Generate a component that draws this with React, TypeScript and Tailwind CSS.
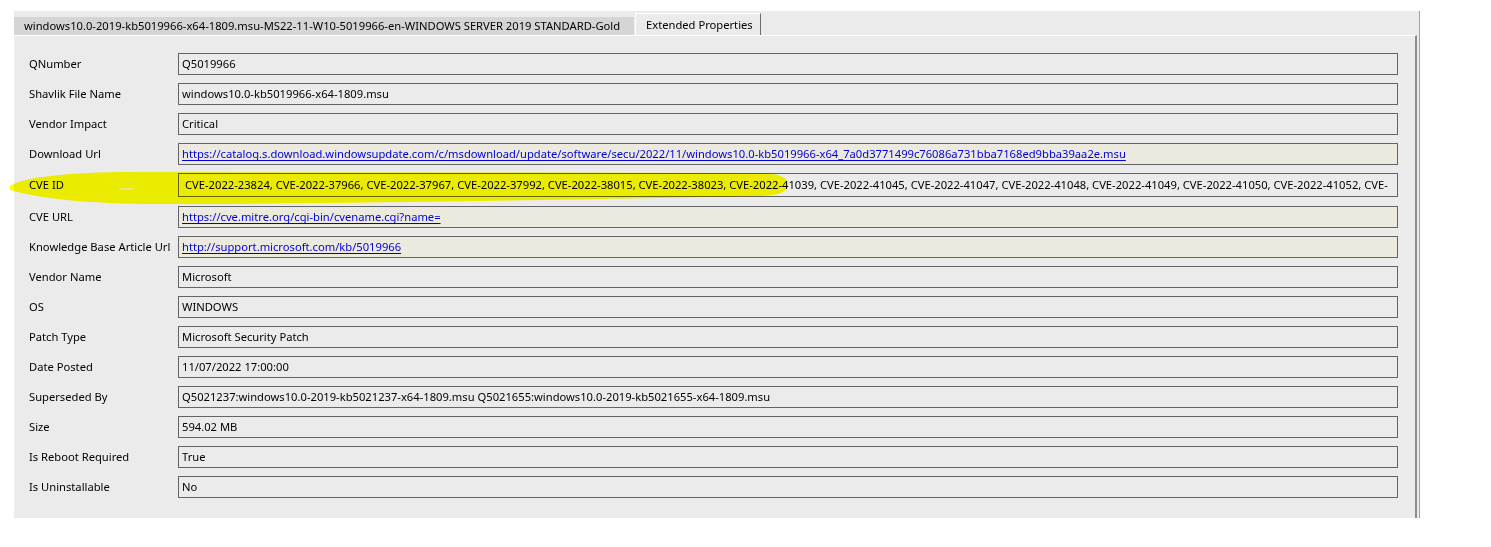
import React from "react";

type Field = {
  label: string;
  value: string;
  link?: boolean;
  tall?: boolean;
};

const cves =
  [
    "23824", "37966", "37967", "37992", "38015", "38023", "41039", "41045",
    "41047", "41048", "41049", "41050", "41052",
  ]
    .map((n) => `CVE-2022-${n}`)
    .join(", ") + ", CVE-";

const fields: Field[] = [
  { label: "QNumber", value: "Q5019966" },
  { label: "Shavlik File Name", value: "windows10.0-kb5019966-x64-1809.msu" },
  { label: "Vendor Impact", value: "Critical" },
  {
    label: "Download Url",
    value:
      "https://catalog.s.download.windowsupdate.com/c/msdownload/update/software/secu/2022/11/windows10.0-kb5019966-x64_7a0d3771499c76086a731bba7168ed9bba39aa2e.msu",
    link: true,
  },
  { label: "CVE ID", value: cves, tall: true },
  { label: "CVE URL", value: "https://cve.mitre.org/cgi-bin/cvename.cgi?name=", link: true },
  { label: "Knowledge Base Article Url", value: "http://support.microsoft.com/kb/5019966", link: true },
  { label: "Vendor Name", value: "Microsoft" },
  { label: "OS", value: "WINDOWS" },
  { label: "Patch Type", value: "Microsoft Security Patch" },
  { label: "Date Posted", value: "11/07/2022 17:00:00" },
  {
    label: "Superseded By",
    value:
      "Q5021237:windows10.0-2019-kb5021237-x64-1809.msu Q5021655:windows10.0-2019-kb5021655-x64-1809.msu",
  },
  { label: "Size", value: "594.02 MB" },
  { label: "Is Reboot Required", value: "True" },
  { label: "Is Uninstallable", value: "No" },
];

function PropertyRow({ label, value, link, tall }: Field) {
  return (
    <div className={tall ? "flex items-center mb-[1px]" : "flex items-center"}>
      <div className="w-[149px] shrink-0 whitespace-nowrap">{label}</div>
      <div
        className={
          "w-[1220px] flex items-center overflow-hidden whitespace-nowrap border border-[#646464] " +
          (tall ? "h-[24px] pl-[6px] " : "h-[22px] pl-[3px] ") +
          (link ? "bg-[#ece9de]" : "bg-[#ebebeb]")
        }
      >
        {link ? (
          <span className="text-[#0000d8] underline underline-offset-[2px]">{value}</span>
        ) : (
          <span>{value}</span>
        )}
      </div>
    </div>
  );
}

// marker stroke drawn over the CVE row
function Highlight() {
  return (
    <svg
      className="absolute left-0 top-0 pointer-events-none mix-blend-multiply"
      width={1491}
      height={547}
      viewBox="0 0 1491 547"
    >
      <path
        d="M10,186 C22,178 60,173 120,172 L765,173 C784,174 790,181 788,186 C786,192 780,195 762,196 C600,199 360,204 160,204 C85,204 38,198 10,190 Z"
        fill="#ffff00"
      />
      <path d="M119,189 L133,189" stroke="#fbfbe0" strokeWidth={1.2} />
    </svg>
  );
}

export default function App() {
  return (
    <div
      className="relative w-[1491px] h-[547px] bg-white text-[11.2px] text-black leading-none"
      style={{ fontFamily: '"Noto Sans", "Segoe UI", sans-serif' }}
    >
      <div className="pt-[11px] pl-[14px]">
        <div className="w-[1406px] h-[507px] bg-[#ebebeb] border-r border-[#a0a0a0] flex flex-col">
          {/* tab strip */}
          <div className="h-[24px] flex items-end">
            <div className="h-[18px] w-[620px] bg-[#d5d5d5] flex items-center pl-[10px] overflow-hidden whitespace-nowrap">
              windows10.0-2019-kb5019966-x64-1809.msu-MS22-11-W10-5019966-en-WINDOWS SERVER 2019 STANDARD-Gold
            </div>
            <div className="h-[22px] w-[126px] ml-[1px] bg-[#ebebeb] border-l border-t border-white border-r border-r-[#6e6e6e] flex items-center pl-[10px] whitespace-nowrap">
              Extended Properties
            </div>
          </div>
          {/* property grid */}
          <div className="flex-1 mr-[2px] border-t border-white border-r-2 border-r-[#8c8c8c] pt-[17px] pl-[15px] flex flex-col gap-[8px]">
            {fields.map((f) => (
              <PropertyRow key={f.label} {...f} />
            ))}
          </div>
        </div>
      </div>
      <Highlight />
    </div>
  );
}
